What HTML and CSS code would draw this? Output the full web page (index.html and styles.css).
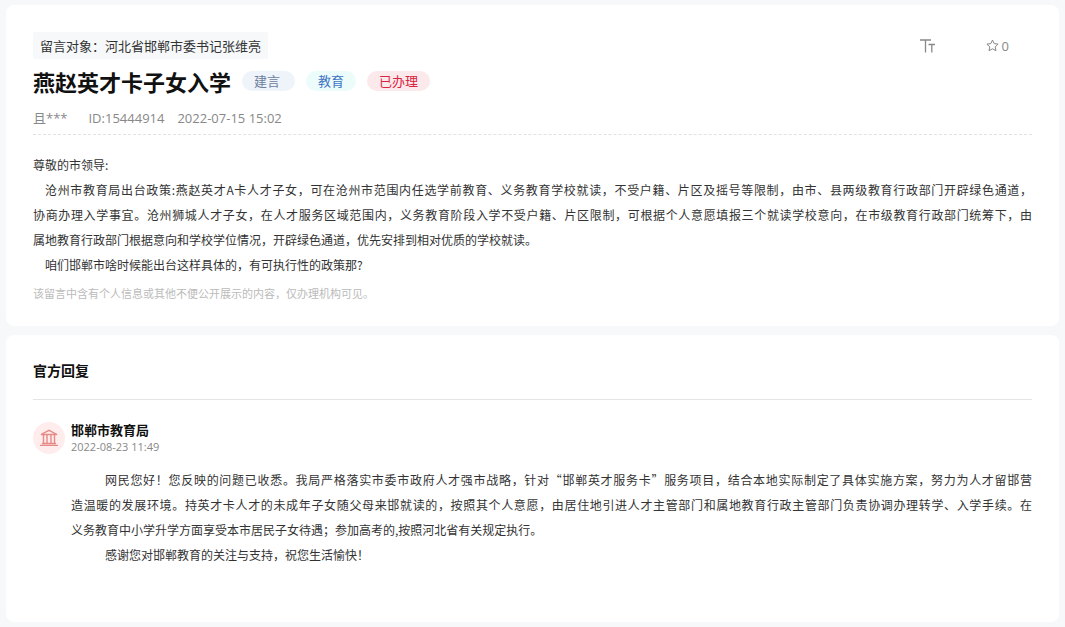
FILE: index.html
```html
<!DOCTYPE html>
<html lang="zh-CN">
<head>
  <meta charset="UTF-8" />
  <meta name="viewport" content="width=device-width, initial-scale=1.0"/>
  <title>燕赵英才卡子女入学</title>
  <link rel="stylesheet" href="styles.css">
</head>
<body>
  <main class="page">
    <article class="card message">
      <div class="top">
        <p class="target">留言对象：河北省邯郸市委书记张维亮</p>
        <div class="tools">
          <button class="tool" type="button" aria-label="字号">
            <svg width="16" height="14" viewBox="0 0 16 14" fill="none" stroke="currentColor" stroke-width="1.3">
              <path d="M0 1h11M5.500 1v12.500M8.500 5.500H15M11.800 5.500v8"/>
            </svg>
          </button>
          <button class="tool" type="button" aria-label="收藏">
            <svg width="13" height="13" viewBox="0 0 13 13" fill="none" stroke="currentColor" stroke-linejoin="round">
              <path d="M6.500 1l1.700 3.600 3.900.5-2.900 2.700.8 3.900-3.500-1.900L3 11.700l.8-3.900L.9 5.100l3.900-.5z"/>
            </svg>
            <span>0</span>
          </button>
        </div>
      </div>
      <div class="heading">
        <h1>燕赵英才卡子女入学</h1>
        <span class="tag type">建言&nbsp;</span>
        <span class="tag field">教育</span>
        <span class="tag state">已办理</span>
      </div>
      <div class="meta">
        <span class="user">且***</span>
        <span>ID:15444914</span>
        <time>2022-07-15 15:02</time>
      </div>
      <div class="text">
        <p>尊敬的市领导:</p>
        <p class="indent">沧州市教育局出台政策:燕赵英才A卡人才子女，可在沧州市范围内任选学前教育、义务教育学校就读，不受户籍、片区及摇号等限制，由市、县两级教育行政部门开辟绿色通道，<span class="keep">协商办理入学事宜</span>。沧州狮城人才子女，在人才服务区域范围内，义务教育阶段入学不受户籍、片区限制，可根据个人意愿填报三个就读学校意向，在市级教育行政部门统筹下，由<span class="keep">属地教育行政部门</span>根据意向和学校学位情况，开辟绿色通道，优先安排到相对优质的学校就读。</p>
        <p class="indent">咱们邯郸市啥时候能出台这样具体的，有可执行性的政策那?</p>
      </div>
      <p class="note">该留言中含有个人信息或其他不便公开展示的内容，仅办理机构可见。</p>
    </article>

    <section class="card reply">
      <h2>官方回复</h2>
      <div class="answer">
        <div class="avatar">
          <svg width="18" height="18" viewBox="0 0 18 18" fill="none" stroke="currentColor" stroke-width="1.400">
            <path d="M1 5.500L9 1.300l8 4.200zM0 16.400h18M2 14.500h14M3.500 6v8.500M7 6v8.500M11 6v8.500M14.500 6v8.500"/>
          </svg>
        </div>
        <div class="content">
          <h3>邯郸市教育局</h3>
          <time class="date">2022-08-23 11:49</time>
          <div class="text">
            <p>网民您好！您反映的问题已收悉。我局严格落实市委市政府人才强市战略，针对“邯郸英才服务卡”服务项目，结合本地实际制定了具体实施方案，努力为人才留邯营<span class="keep">造温暖的发展环境</span>。持英才卡人才的未成年子女随父母来邯就读的，按照其个人意愿，由居住地引进人才主管部门和属地教育行政主管部门负责协调办理转学、入学手续。在<span class="keep">义务教育中小学</span>升学方面享受本市居民子女待遇；参加高考的,按照河北省有关规定执行。</p>
            <p>感谢您对邯郸教育的关注与支持，祝您生活愉快！</p>
          </div>
        </div>
      </div>
    </section>
  </main>
</body>
</html>
```
FILE: styles.css
```css
* {
  margin: 0;
  padding: 0;
  box-sizing: border-box;
}
body {
  background: #f6f8fa;
  color: #333;
  font-family: "Noto Sans CJK SC", sans-serif;
  font-size: 13px;
}
.page {
  display: flex;
  flex-direction: column;
  gap: 9px;
  padding: 5px 6px;
}
.card {
  background: #fff;
  border-radius: 8px;
  padding: 27px;
}
.message {
  padding-bottom: 23px;
}
.top {
  display: flex;
  justify-content: space-between;
  align-items: center;
}
.target {
  background: #f6f8fa;
  border-radius: 2px;
  padding: 0 7px;
  line-height: 27px;
}
.tools {
  display: flex;
  gap: 50px;
  padding-right: 23px;
}
.tool {
  display: flex;
  align-items: center;
  gap: 3px;
  border: none;
  background: none;
  color: #888;
  font-family: "Open Sans", sans-serif;
  font-size: 13px;
  line-height: 20px;
  cursor: pointer;
}
.heading {
  display: flex;
  align-items: center;
  gap: 11px;
  height: 44px;
}
h1 {
  color: #111;
  font-size: 22px;
  line-height: 32px;
}
.tag {
  border-radius: 10px;
  padding: 0 12px;
  line-height: 20px;
}
.type {
  background: #eff3fa;
  color: #6b7f9e;
}
.field {
  background: #ebfcfa;
  color: #3f73c4;
}
.state {
  background: #fbe9eb;
  color: #d9243f;
}
.meta {
  display: flex;
  gap: 13px;
  border-bottom: 1px dashed #e2e2e2;
  padding: 3px 0;
  color: #888;
  font-family: "Open Sans", "Noto Sans CJK SC", sans-serif;
  line-height: 25px;
}
.user {
  margin-right: 8px;
}
.text {
  font-size: 12px;
  line-height: 25px;
  text-align: justify;
}
.message .text {
  padding-top: 17px;
}
.indent {
  text-indent: 12px;
}
.keep {
  white-space: nowrap;
}
.note {
  padding-top: 6px;
  color: #bbb;
  font-size: 11px;
  line-height: 20px;
}
.reply {
  padding-top: 22px;
  padding-bottom: 55px;
}
h2 {
  border-bottom: 1px solid #e5e5e5;
  padding-bottom: 16px;
  color: #111;
  font-size: 14px;
  line-height: 26px;
}
.answer {
  display: flex;
  gap: 6px;
  padding-top: 20px;
}
.avatar {
  display: flex;
  flex: none;
  justify-content: center;
  align-items: center;
  width: 32px;
  height: 32px;
  margin-top: 2px;
  border-radius: 50%;
  background: #ffeded;
  color: #e58a87;
}
.content {
  flex: 1;
}
h3 {
  color: #111;
  font-size: 13px;
  line-height: 19px;
}
.date {
  display: block;
  color: #888;
  font-family: "Open Sans", sans-serif;
  font-size: 11px;
  line-height: 15px;
}
.reply .text {
  padding-top: 13px;
  text-indent: 34px;
}
```
